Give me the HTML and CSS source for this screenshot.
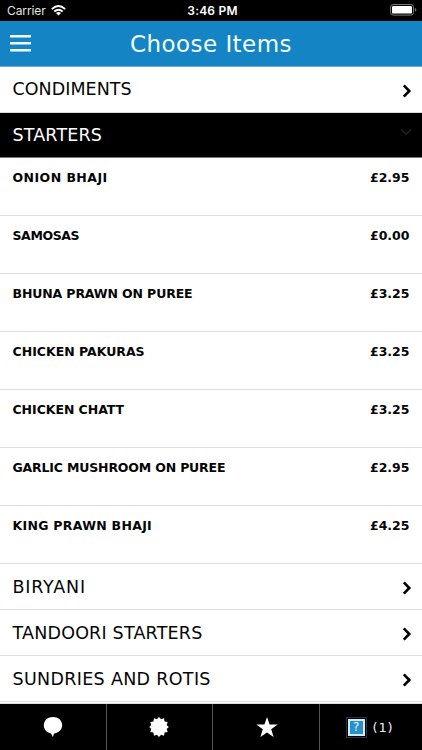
FILE: index.html
```html
<!DOCTYPE html>
<html lang="en">
<head>
<meta charset="utf-8">
<title>Choose Items</title>
<link rel="stylesheet" href="styles.css">
</head>
<body>
<div class="status">
  <div class="carrier"><span>Carrier</span>
    <svg width="15" height="11" viewBox="0 0 15 11" fill="none" stroke="#fff" stroke-width="1.9"><path d="M.8 4.1Q7.5-2 14.2 4.1M3.3 6.5Q7.5 2.8 11.7 6.5"/><path d="M7.5 10.6 5 8.1Q7.5 6.1 10 8.1Z" fill="#fff" stroke="none"/></svg>
  </div>
  <div class="time">3:46 PM</div>
  <svg class="battery" width="27" height="12" viewBox="0 0 27 12"><rect x=".5" y=".5" width="23" height="10.6" rx="2.6" fill="none" stroke="#777"/><rect x="2" y="2" width="20" height="7.6" rx="1.2" fill="#fff"/><path d="M25 4q1.4.4 1.4 1.8T25 7.6Z" fill="#777"/></svg>
</div>
<header class="bar">
  <svg class="menu" width="21" height="17" viewBox="0 0 21 17" fill="#f2ffff"><path d="M0 0h21v2.500H0zM0 7h21v2.500H0zM0 14h21v2.500H0z"/></svg>
  <h1>Choose Items</h1>
</header>
<main>
  <div class="cat"><span class="c1">CONDIMENTS</span><svg class="chev" viewBox="0 0 10 14"><path d="M1.800 1.300 7.300 7 1.800 12.700"/></svg></div>
  <div class="cat open"><span class="c2">STARTERS</span><svg class="down" viewBox="0 0 12 8"><path d="M1 1.500 6 6l5-4.500"/></svg></div>
  <div class="item"><span class="i1">ONION BHAJI</span><b>£2.95</b></div>
  <div class="item"><span class="i2">SAMOSAS</span><b>£0.00</b></div>
  <div class="item"><span class="i3">BHUNA PRAWN ON PUREE</span><b>£3.25</b></div>
  <div class="item"><span class="i4">CHICKEN PAKURAS</span><b>£3.25</b></div>
  <div class="item"><span class="i5">CHICKEN CHATT</span><b>£3.25</b></div>
  <div class="item"><span class="i6">GARLIC MUSHROOM ON PUREE</span><b>£2.95</b></div>
  <div class="item"><span class="i7">KING PRAWN BHAJI</span><b>£4.25</b></div>
  <div class="cat low"><span class="c3">BIRYANI</span><svg class="chev" viewBox="0 0 10 14"><path d="M1.800 1.300 7.300 7 1.800 12.700"/></svg></div>
  <div class="cat low"><span class="c4">TANDOORI STARTERS</span><svg class="chev" viewBox="0 0 10 14"><path d="M1.800 1.300 7.300 7 1.800 12.700"/></svg></div>
  <div class="cat low"><span class="c5">SUNDRIES AND ROTIS</span><svg class="chev" viewBox="0 0 10 14"><path d="M1.800 1.300 7.300 7 1.800 12.700"/></svg></div>
</main>
<nav class="tabs">
  <div class="tab"><svg width="20" height="20" viewBox="0 0 20 20" fill="#fff"><path d="M10 0C4.800 0 .8 3.500.8 8.200c0 4 2.800 7.100 6.600 8 1 .4 1.400 1.600 2.400 3.800.7-.8.6-2.500 1.200-3.600 4.700-.5 8.200-3.900 8.200-8.200C19.200 3.500 15.200 0 10 0Z"/></svg></div>
  <div class="tab"><svg width="20" height="20" viewBox="-10 -10 20 20" fill="#fff"><path d="M0-10 2.100-7.700 5-8.660 5.600-5.600 8.660-5 7.700-2.100 9.800 0 7.700 2.100 8.660 5 5.600 5.600 5 8.660 2.100 7.700 0 10-2.100 7.700-5 8.660-5.600 5.600-8.660 5-7.700 2.100-9.800 0-7.700-2.100-8.660-5-5.600-5.600-5-8.660-2.100-7.700Z"/></svg></div>
  <div class="tab star"><svg width="22" height="20" viewBox="0 0 22 20" fill="#fff"><path d="M11 0 13.600 7.400 21.700 7.500 15.200 12.300 17.600 20 11 15.400 4.400 20 6.800 12.300.3 7.500 8.400 7.400Z"/></svg></div>
  <div class="tab basket"><span class="help">?</span><span class="count">(1)</span></div>
</nav>
</body>
</html>
```
FILE: styles.css
```css
* { box-sizing: border-box; }
body { margin: 0; width: 422px; height: 750px; overflow: hidden; display: flex; flex-direction: column; background: #fff; font-family: Verdana, "DejaVu Sans", sans-serif; color: #050505; }
.status { height: 21px; flex: none; background: #000; color: #fff; display: grid; grid-template-columns: 1fr auto 1fr; align-items: center; padding: 0 5px 1px 7px; font: 12px Inter, sans-serif; }
.carrier { display: flex; align-items: center; gap: 5px; color: #e4e4e4; letter-spacing: -.1px; }
.time { font-weight: 600; letter-spacing: .2px; padding-left: 1px; }
.battery { justify-self: end; }
.bar { height: 46px; flex: none; background: #1584c5; border-bottom: 1px solid #6db2dc; display: grid; grid-template-columns: 21px 1fr 21px; align-items: start; padding: 0 10px; color: #f2ffff; }
.menu { margin-top: 14px; }
.bar h1 { margin: 0; font-size: 23px; font-weight: 400; text-align: center; letter-spacing: .45px; line-height: 45px; padding-top: 1px; }
main { flex: 1; min-height: 0; overflow: hidden; border-bottom: 1px solid #ddd; }
.cat { height: 46px; border-bottom: 1px solid #ddd; display: flex; align-items: center; justify-content: space-between; padding: 0 10px 0 12.5px; font-size: 17.5px; line-height: 45px; white-space: nowrap; }
.cat.open { height: 45px; background: #000; color: #fff; border-color: #777; }
.cat.low span { padding-top: 1px; }
.c1 { letter-spacing: .05px; }
.c2 { letter-spacing: .15px; }
.c3 { letter-spacing: .8px; }
.c4 { letter-spacing: .2px; }
.c5 { letter-spacing: .32px; }
.chev { width: 10px; height: 14px; fill: none; stroke: #000; stroke-width: 2.6; position: relative; top: 1px; }
.down { width: 12px; height: 8px; fill: none; stroke: #222; stroke-width: 1.5; position: relative; top: -3px; }
.item { height: 58px; border-bottom: 1px solid #ddd; display: flex; justify-content: space-between; padding: 11px 12.5px 0; font-size: 12.5px; line-height: 18px; font-weight: 700; white-space: nowrap; }
.i1 { letter-spacing: .45px; }
.i2 { letter-spacing: -.4px; }
.i3 { letter-spacing: -.13px; }
.i5 { letter-spacing: -.05px; }
.i6 { letter-spacing: -.17px; }
.i7 { letter-spacing: .29px; }
.tabs { height: 46px; flex: none; background: #000; display: grid; grid-template-columns: 107px 106px 107px 1fr; }
.tab { display: flex; align-items: center; justify-content: center; border-right: 1px solid #555; padding-right: 1px; }
.tab:last-child { border: 0; }
.tab.star { padding: 0 0 0 2px; }
.basket { gap: 6px; color: #eee; font-size: 13px; letter-spacing: .8px; padding-right: 3px; }
.help { width: 21px; height: 21px; border: 1px solid #243440; background: #2b8fcc; box-shadow: inset 0 0 0 1px #000, inset 0 0 0 3px #c9ecff; color: #e8f8ff; font-size: 12px; line-height: 19px; text-align: center; letter-spacing: 0; }
```
